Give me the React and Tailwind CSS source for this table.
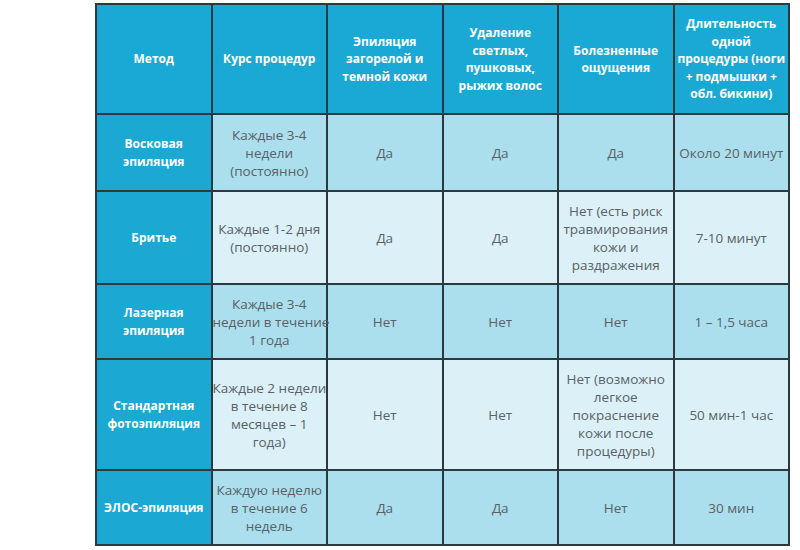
const headers = [
  'Метод',
  'Курс процедур',
  'Эпиляция\nзагорелой и\nтемной кожи',
  'Удаление\nсветлых,\nпушковых,\nрыжих волос',
  'Болезненные\nощущения',
  'Длительность\nодной\nпроцедуры (ноги\n+ подмышки +\nобл. бикини)',
]

const rows = [
  { h: 'h-[77px]', bg: 'bg-[#abdfed]', cells: ['Восковая\nэпиляция', 'Каждые 3-4\nнедели\n(постоянно)', 'Да', 'Да', 'Да', 'Около 20 минут'] },
  { h: 'h-[93px]', bg: 'bg-[#dbf1f7]', cells: ['Бритье', 'Каждые 1-2 дня\n(постоянно)', 'Да', 'Да', 'Нет (есть риск\nтравмирования\nкожи и\nраздражения', '7-10 минут'] },
  { h: 'h-[75px]', bg: 'bg-[#abdfed]', cells: ['Лазерная\nэпиляция', 'Каждые 3-4\nнедели в течение\n1 года', 'Нет', 'Нет', 'Нет', '1 – 1,5 часа'] },
  { h: 'h-[111px]', bg: 'bg-[#dbf1f7]', cells: ['Стандартная\nфотоэпиляция', 'Каждые 2 недели\nв течение 8\nмесяцев – 1\nгода)', 'Нет', 'Нет', 'Нет (возможно\nлегкое\nпокраснение\nкожи после\nпроцедуры)', '50 мин-1 час'] },
  { h: 'h-[75px]', bg: 'bg-[#abdfed]', cells: ['ЭЛОС-эпиляция', 'Каждую неделю\nв течение 6\nнедель', 'Да', 'Да', 'Нет', '30 мин'] },
]

export default function App() {
  return (
    <div className="w-[800px] h-[550px] bg-white pl-[95px] pt-[3px]" style={{ fontFamily: '"Open Sans", "Noto Sans", sans-serif' }}>
      <table className="table-fixed border-collapse w-[695px] border-2 border-[#2c3a40]">
        <thead>
          <tr className="h-[110px]">
            {headers.map((t) => (
              <th key={t} className="border-2 border-[#2c3a40] bg-[#1aa9d4] text-white text-[12px] font-bold leading-[17.5px] px-0 text-center align-middle whitespace-pre">
                {t}
              </th>
            ))}
          </tr>
        </thead>
        <tbody>
          {rows.map((r) => (
            <tr key={r.cells[0]} className={r.h}>
              {r.cells.map((c, i) =>
                i === 0 ? (
                  <td key={i} className="border-2 border-[#2c3a40] bg-[#1ba8d3] text-white text-[12px] font-bold leading-[18px] px-0 text-center align-middle whitespace-pre">
                    {c}
                  </td>
                ) : (
                  <td key={i} className={`border-2 border-[#2c3a40] ${r.bg} text-[#5a6166] text-[13.5px] leading-[18px] px-0 text-center align-middle whitespace-pre`}>
                    {c}
                  </td>
                )
              )}
            </tr>
          ))}
        </tbody>
      </table>
    </div>
  )
}
